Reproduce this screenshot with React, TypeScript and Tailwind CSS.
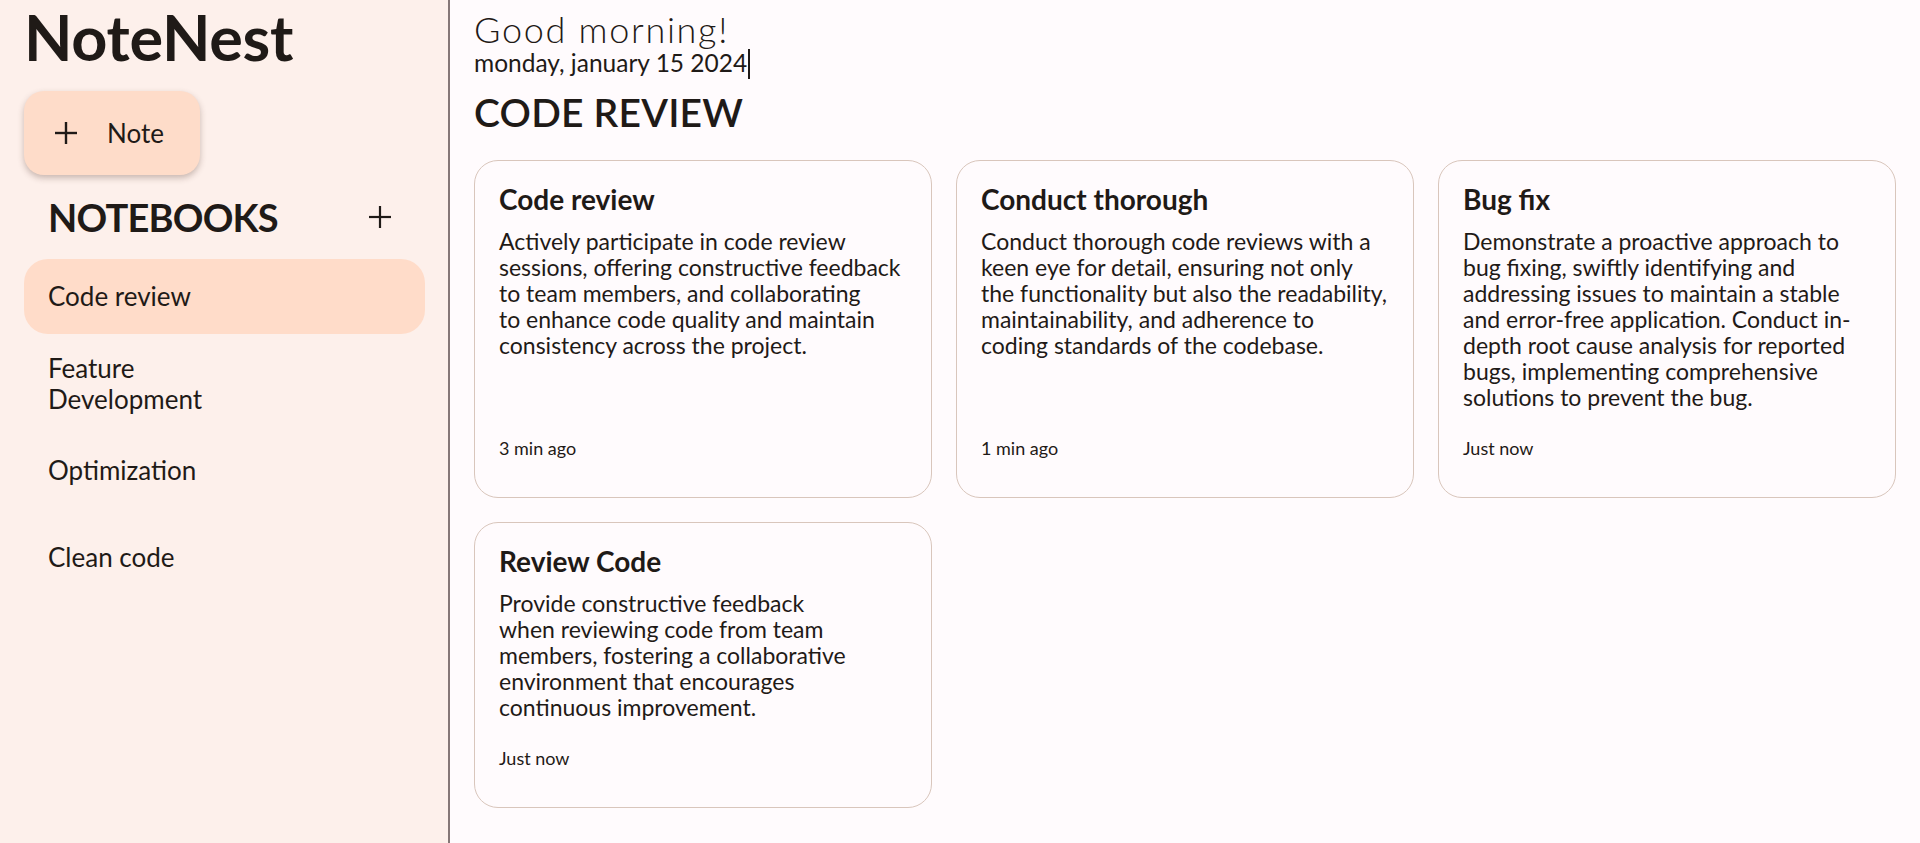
import React from 'react';

const font = { fontFamily: 'Lato, "Open Sans", sans-serif' };

interface Note {
    title: string;
    lines: string[];
    time: string;
}

const notes: Note[] = [
    {
        title: 'Code review',
        lines: [
            'Actively participate in code review',
            'sessions, offering constructive feedback',
            'to team members, and collaborating',
            'to enhance code quality and maintain',
            'consistency across the project.',
        ],
        time: '3 min ago',
    },
    {
        title: 'Conduct thorough',
        lines: [
            'Conduct thorough code reviews with a',
            'keen eye for detail, ensuring not only',
            'the functionality but also the readability,',
            'maintainability, and adherence to',
            'coding standards of the codebase.',
        ],
        time: '1 min ago',
    },
    {
        title: 'Bug fix',
        lines: [
            'Demonstrate a proactive approach to',
            'bug fixing, swiftly identifying and',
            'addressing issues to maintain a stable',
            'and error-free application. Conduct in-',
            'depth root cause analysis for reported',
            'bugs, implementing comprehensive',
            'solutions to prevent the bug.',
        ],
        time: 'Just now',
    },
    {
        title: 'Review Code',
        lines: [
            'Provide constructive feedback',
            'when reviewing code from team',
            'members, fostering a collaborative',
            'environment that encourages',
            'continuous improvement.',
        ],
        time: 'Just now',
    },
];

const notebooks = ['Code review', 'Feature Development', 'Optimization', 'Clean code'];

const PlusMark = ({ size = 22, stroke = 2.4 }: { size?: number; stroke?: number }) => (
    <svg width={size} height={size} viewBox="0 0 22 22" fill="none" stroke="#1f1a17" strokeWidth={stroke}>
        <line x1="11" y1="0" x2="11" y2="22" />
        <line x1="0" y1="11" x2="22" y2="11" />
    </svg>
);

export default function App() {
    return (
        <div className="flex h-screen w-full bg-[#fffbfd] text-[#1f1a17]" style={font}>
            {/* Sidebar */}
            <aside className="w-[450px] shrink-0 h-full bg-[#fdf0eb] border-r-2 border-[#857777] pl-6 pr-[23px] flex flex-col">
                <h1 className="text-[63px] leading-none font-bold pt-[5px] tracking-[-0.3px]">NoteNest</h1>

                <button className="mt-[23px] w-[176px] h-[84px] rounded-[20px] bg-[#fedcc9] shadow-[0_3px_6px_rgba(80,50,40,0.3)] flex items-center pl-[31px] gap-[30px] text-[26px]">
                    <PlusMark size={22} stroke={2.4} />
                    <span>Note</span>
                </button>

                <div className="mt-[23px] pl-6 pr-[34px] flex items-center justify-between">
                    <h2 className="text-[38px] leading-none font-bold tracking-[-0.8px]">NOTEBOOKS</h2>
                    <PlusMark size={22} stroke={2.2} />
                </div>

                <nav className="mt-[23px] flex flex-col gap-3">
                    {notebooks.map((name, idx) => (
                        <div
                            key={name}
                            className={`h-[75px] flex items-center px-6 rounded-3xl text-[26px] leading-[31px] ${idx === 0 ? 'bg-[#ffdcc9]' : ''}`}
                        >
                            <span className="max-w-[170px]">{name}</span>
                        </div>
                    ))}
                </nav>
            </aside>

            {/* Main */}
            <main className="flex-1 pl-[24px] pr-6 overflow-hidden">
                <h2 className="text-[36px] leading-none font-light pt-[11px] tracking-[1.7px]">Good morning!</h2>
                <div className="mt-1 flex items-center text-[24.5px] leading-none h-[25px]">
                    <span>monday, january 15 2024</span>
                    <span className="inline-block w-[2px] h-[30px] bg-[#1f1a17] ml-[1px]"></span>
                </div>
                <h3 className="mt-[17px] text-[39px] leading-none font-semibold tracking-[0.2px]">CODE REVIEW</h3>

                <div className="mt-[28px] grid grid-cols-3 gap-6">
                    {notes.map((note) => (
                        <div
                            key={note.title}
                            className="rounded-3xl border border-[#d9c6bc] bg-[#fffbfd] pt-6 px-6 pb-[39px] flex flex-col"
                        >
                            <h4 className="text-[28px] leading-none font-bold">{note.title}</h4>
                            <div className="mt-[15px] mb-7 text-[23px] leading-[26px]">
                                {note.lines.map((line) => (
                                    <div key={line} className="whitespace-nowrap">{line}</div>
                                ))}
                            </div>
                            <div className="mt-auto text-[18px] leading-5">{note.time}</div>
                        </div>
                    ))}
                </div>
            </main>
        </div>
    );
}
